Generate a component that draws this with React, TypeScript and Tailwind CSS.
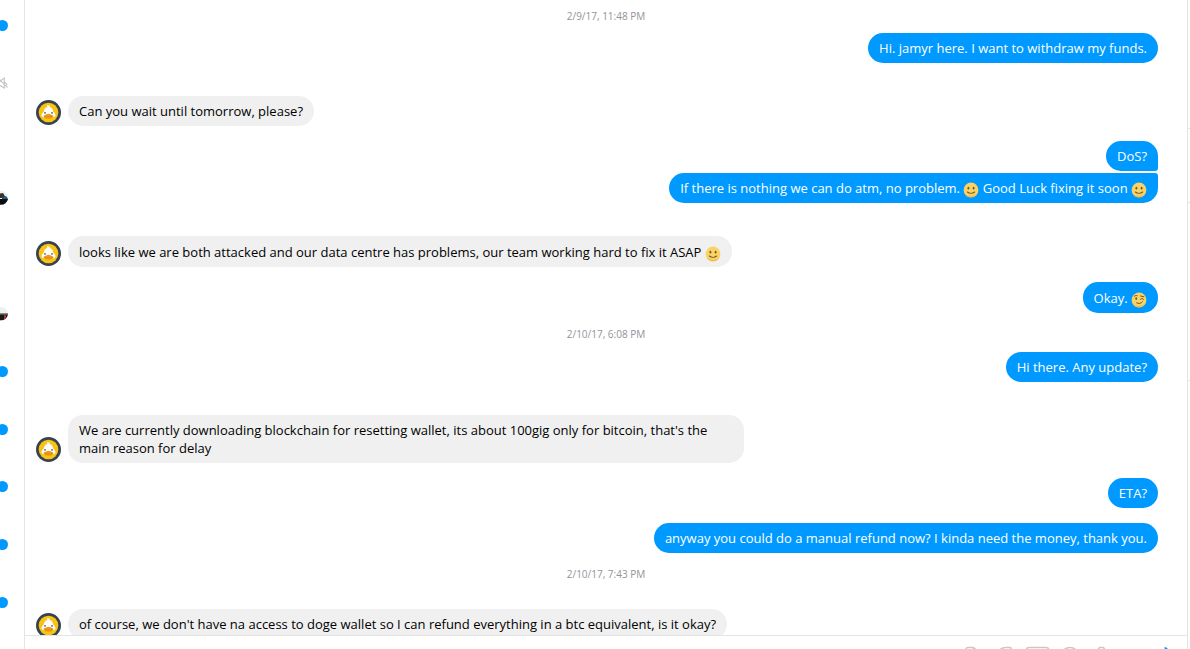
import React from "react";

type Face = "smile" | "wink";
type Part = string | { emoji: Face };
type Item =
  | { kind: "time"; text: string }
  | { kind: "in"; parts: Part[] }
  | { kind: "out"; parts: Part[]; group?: "first" | "last" };

const smile: Part = { emoji: "smile" };
const wink: Part = { emoji: "wink" };

const items: Item[] = [
  { kind: "time", text: "2/9/17, 11:48 PM" },
  { kind: "out", parts: ["Hi. jamyr here. I want to withdraw my funds."] },
  { kind: "in", parts: ["Can you wait until tomorrow, please?"] },
  { kind: "out", parts: ["DoS?"], group: "first" },
  {
    kind: "out",
    parts: ["If there is nothing we can do atm, no problem. ", smile, " Good Luck fixing it soon ", smile],
    group: "last",
  },
  {
    kind: "in",
    parts: ["looks like we are both attacked and our data centre has problems, our team working hard to fix it ASAP ", smile],
  },
  { kind: "out", parts: ["Okay. ", wink] },
  { kind: "time", text: "2/10/17, 6:08 PM" },
  { kind: "out", parts: ["Hi there. Any update?"] },
  {
    kind: "in",
    parts: [
      "We are currently downloading blockchain for resetting wallet, its about 100gig only for bitcoin, that's the main reason for delay",
    ],
  },
  { kind: "out", parts: ["ETA?"] },
  { kind: "out", parts: ["anyway you could do a manual refund now? I kinda need the money, thank you."] },
  { kind: "time", text: "2/10/17, 7:43 PM" },
  {
    kind: "in",
    parts: ["of course, we don't have na access to doge wallet so I can refund everything in a btc equivalent, is it okay?"],
  },
];

type Status = "unread" | "muted" | "none" | "seenBlue" | "seenRed";

const threads: Status[] = [
  "unread", "muted", "none", "seenBlue", "none", "seenRed", "unread", "unread", "unread", "unread", "unread",
];

function Emoji({ type }: { type: Face }) {
  return (
    <svg viewBox="0 0 16 16" className="-my-1 inline-block size-4 align-middle" role="img" aria-label={type}>
      <circle cx="8" cy="8" r="7.4" fill="#fbd264" />
      <path d="M1.4 11.2a7.4 7.4 0 0 0 13.2 0A9 9 0 0 1 1.4 11.2" fill="#f0bd50" />
      {type === "smile" ? (
        <>
          <ellipse cx="5.4" cy="6.2" rx=".9" ry="1.4" fill="#6b5730" />
          <ellipse cx="10.6" cy="6.2" rx=".9" ry="1.4" fill="#6b5730" />
          <path d="M4.4 10c2 1.700 5.200 1.700 7.200 0" fill="none" stroke="#6b5730" strokeWidth="1.1" strokeLinecap="round" />
        </>
      ) : (
        <>
          <ellipse cx="5.2" cy="6.6" rx=".9" ry="1.3" fill="#6b5730" />
          <path
            d="M3.400 4.200c.8-.8 1.800-1 2.800-.6M9.600 4l3.200.8M9.400 7.200c1-.9 2.400-.8 3.200.2M5.600 10.800c1.800 1.300 4.400.8 5.800-1"
            fill="none"
            stroke="#6b5730"
            strokeWidth="1"
            strokeLinecap="round"
          />
        </>
      )}
    </svg>
  );
}

function DuckAvatar() {
  return (
    <svg viewBox="0 0 25 25" className="mb-px size-[25px] shrink-0" role="img" aria-label="Duck">
      <circle cx="12.5" cy="12.5" r="12.5" fill="#384350" />
      <circle cx="12.5" cy="12.5" r="9.8" fill="#f8c312" />
      <path
        d="M11.600 7c-.9-.8-.8-1.700.1-1.900l.7.700c.5-1 1.600-.7 1.300.3l-.2.900c2.200.5 3.600 2.200 3.700 4.700 1.500.8 2.300 2.300 2.300 4.200-1.300 1.500-3.500 2-7 2s-5.700-.5-7-2c0-1.900.8-3.400 2.300-4.200.1-2.500 1.500-4.300 3.800-4.700z"
        fill="#fff"
      />
      <circle cx="9" cy="12.900" r=".8" fill="#444" />
      <circle cx="16" cy="12.900" r=".8" fill="#444" />
      <path
        d="M12.500 13.700c1.600 0 2.200.8 3.400 1.200 1.300.4 1.600 1.200 1.300 2.200-.4 1.200-2.400 1.700-4.700 1.700s-4.300-.5-4.700-1.700c-.3-1 0-1.800 1.300-2.200 1.200-.4 1.800-1.200 3.400-1.200z"
        fill="#ee9a1c"
      />
      <path d="M8.500 16.300c2 .9 6 .9 8 0" fill="none" stroke="#d9800f" strokeWidth=".7" />
    </svg>
  );
}

function SeenPhoto({ accent }: { accent: "blue" | "red" }) {
  return (
    <svg viewBox="0 0 14 14" className="size-3.5 shrink-0" role="img" aria-label="Seen">
      <circle cx="7" cy="7" r="7" fill="#eef2ee" />
      {accent === "blue" ? (
        <>
          <path d="M6 2.500 9 2l1.500 2.500L11.500 7H6z" fill="#3a3028" />
          <path d="M8 6.500 12 5l1.900 2.500L13 10H8z" fill="#1f5a86" />
          <path d="M0 7.500 8 8l5.900 0A7 7 0 0 1 .1 8z" fill="#0a0c10" />
        </>
      ) : (
        <>
          <path d="M0 6h14l-.3 2H0z" fill="#7f8b96" />
          <path d="M.1 7.500h13.800A7 7 0 0 1 .1 7.500z" fill="#1b1517" />
          <path d="M10 7.500h2v4l-2 .8z" fill="#a8392c" />
        </>
      )}
    </svg>
  );
}

function ThreadStatus({ status }: { status: Status }) {
  if (status === "unread") return <span className="size-[11px] shrink-0 rounded-full bg-[#0099ff]" />;
  if (status === "muted") {
    return (
      <svg viewBox="0 0 12 12" className="size-3 shrink-0" fill="none" stroke="#c4c4c4" strokeWidth="1.1" role="img" aria-label="Muted">
        <path d="M1 4.500h2.500L8.300 1v10L3.500 8H1zM2.500 1.500l9 9M9 5.500l2.300 2.300" />
      </svg>
    );
  }
  if (status === "seenBlue") return <SeenPhoto accent="blue" />;
  if (status === "seenRed") return <SeenPhoto accent="red" />;
  return null;
}

function Parts({ parts }: { parts: Part[] }) {
  return (
    <>
      {parts.map((p, i) => (typeof p === "string" ? <span key={i}>{p}</span> : <Emoji key={i} type={p.emoji} />))}
    </>
  );
}

function Row({ item }: { item: Item }) {
  if (item.kind === "time") {
    return (
      <time className="mt-[15px] mb-3 block text-center text-[10px] leading-3 text-[#909499] first:mt-0 first:mb-[11px]">
        {item.text}
      </time>
    );
  }
  const tall = item.parts.some((p) => typeof p !== "string") && !(item.kind === "out" && item.group);
  const pad = tall ? "pt-[7px] pb-1.5" : "py-1.5";
  if (item.kind === "in") {
    return (
      <div className="mt-[33px] flex items-end gap-[7px] pl-[11px] [time+&]:mt-[29px]">
        <DuckAvatar />
        <p className={`max-w-[676px] rounded-[15px] bg-[#f0f0f0] px-[11px] text-black ${pad}`}>
          <Parts parts={item.parts} />
        </p>
      </div>
    );
  }
  const shape = item.group === "first" ? "rounded-br-[3px]" : item.group === "last" ? "rounded-tr-[3px]" : "";
  const gap = item.group === "last" ? "mt-0.5" : "mt-[15px]";
  return (
    <div className={`flex justify-end pr-[29px] [time+&]:mt-0 ${gap}`}>
      <p className={`rounded-[15px] bg-[#0099ff] px-[11px] text-white ${pad} ${shape}`}>
        <Parts parts={item.parts} />
      </p>
    </div>
  );
}

const tools = [
  { label: "Add photos", d: "M6 1.500h5.500l7 6.500v10a2 2 0 0 1-2 2H6a2 2 0 0 1-2-2v-14.500a2 2 0 0 1 2-2zM11.500 1.500v5a1.500 1.500 0 0 0 1.500 1.500h5.500" },
  { label: "Stickers", d: "M2 12C2 6 6.500 1.500 12 1.500h3.500a2 2 0 0 1 2 2V12c0 5-3 8-7.500 8S2 17 2 12z" },
  { label: "GIF", d: "M3 1.500h17a3 3 0 0 1 3 3v10a3 3 0 0 1-3 3H3a3 3 0 0 1-3-3v-10a3 3 0 0 1 3-3z" },
  { label: "Emoji", d: "M12 1.500a9 9 0 1 1 0 18 9 9 0 0 1 0-18zM8 12c2 3 6 3 8 0" },
  { label: "Camera", d: "M9.500 1.500h4L15.500 4.500H20v13H2v-13h5.500z" },
];

function Composer() {
  return (
    <footer className="flex h-3.5 shrink-0 justify-end overflow-hidden border-t border-[#e4e4e4] pt-2.5 pr-[5px]">
      {tools.map((t) => (
        <button key={t.label} type="button" aria-label={t.label} className="flex h-6 w-8 shrink-0 justify-center">
          <svg viewBox="0 0 24 24" className="size-6" fill="none" stroke="#c8c8c8" strokeWidth="1.6">
            <path d={t.d} />
          </svg>
        </button>
      ))}
      <button type="button" aria-label="Like" className="ml-8 flex h-6 w-8 shrink-0 justify-center">
        <svg viewBox="0 0 24 24" className="size-6" fill="#0099ff">
          <path d="M10.500 1c2.500 0 4 2 3.500 4.500L13.500 8H19c2 0 2.500 2 1.500 3l-1.500 8c-.5 1-1 1.500-2 1.500H9V11l2-5z" />
        </svg>
      </button>
    </footer>
  );
}

export default function App() {
  return (
    <div className="flex h-screen overflow-hidden bg-white font-['Open_Sans','Noto_Sans',sans-serif] text-[13px] leading-[18px]">
      <aside aria-label="Conversations" className="w-6 shrink-0 overflow-hidden">
        <ul className="-mt-1">
          {threads.map((s, i) => (
            <li key={i} className="flex h-[58px] items-center justify-end pr-4 nth-[3n]:h-[57px]">
              <ThreadStatus status={s} />
            </li>
          ))}
        </ul>
      </aside>
      <main className="flex min-w-0 flex-1 flex-col border-x border-[#e4e4e4]">
        <section aria-label="Messages" className="min-h-0 flex-1 overflow-hidden pt-2.5">
          {items.map((it, i) => (
            <Row key={i} item={it} />
          ))}
        </section>
        <Composer />
      </main>
      <aside aria-label="Details" className="w-0.5 shrink-0">
        <div className="h-[129px] border-b border-[#e4e4e4]" />
        <div className="h-[74px] border-b border-[#e4e4e4]" />
        <div className="h-[178px] border-b border-[#e4e4e4]" />
      </aside>
    </div>
  );
}
